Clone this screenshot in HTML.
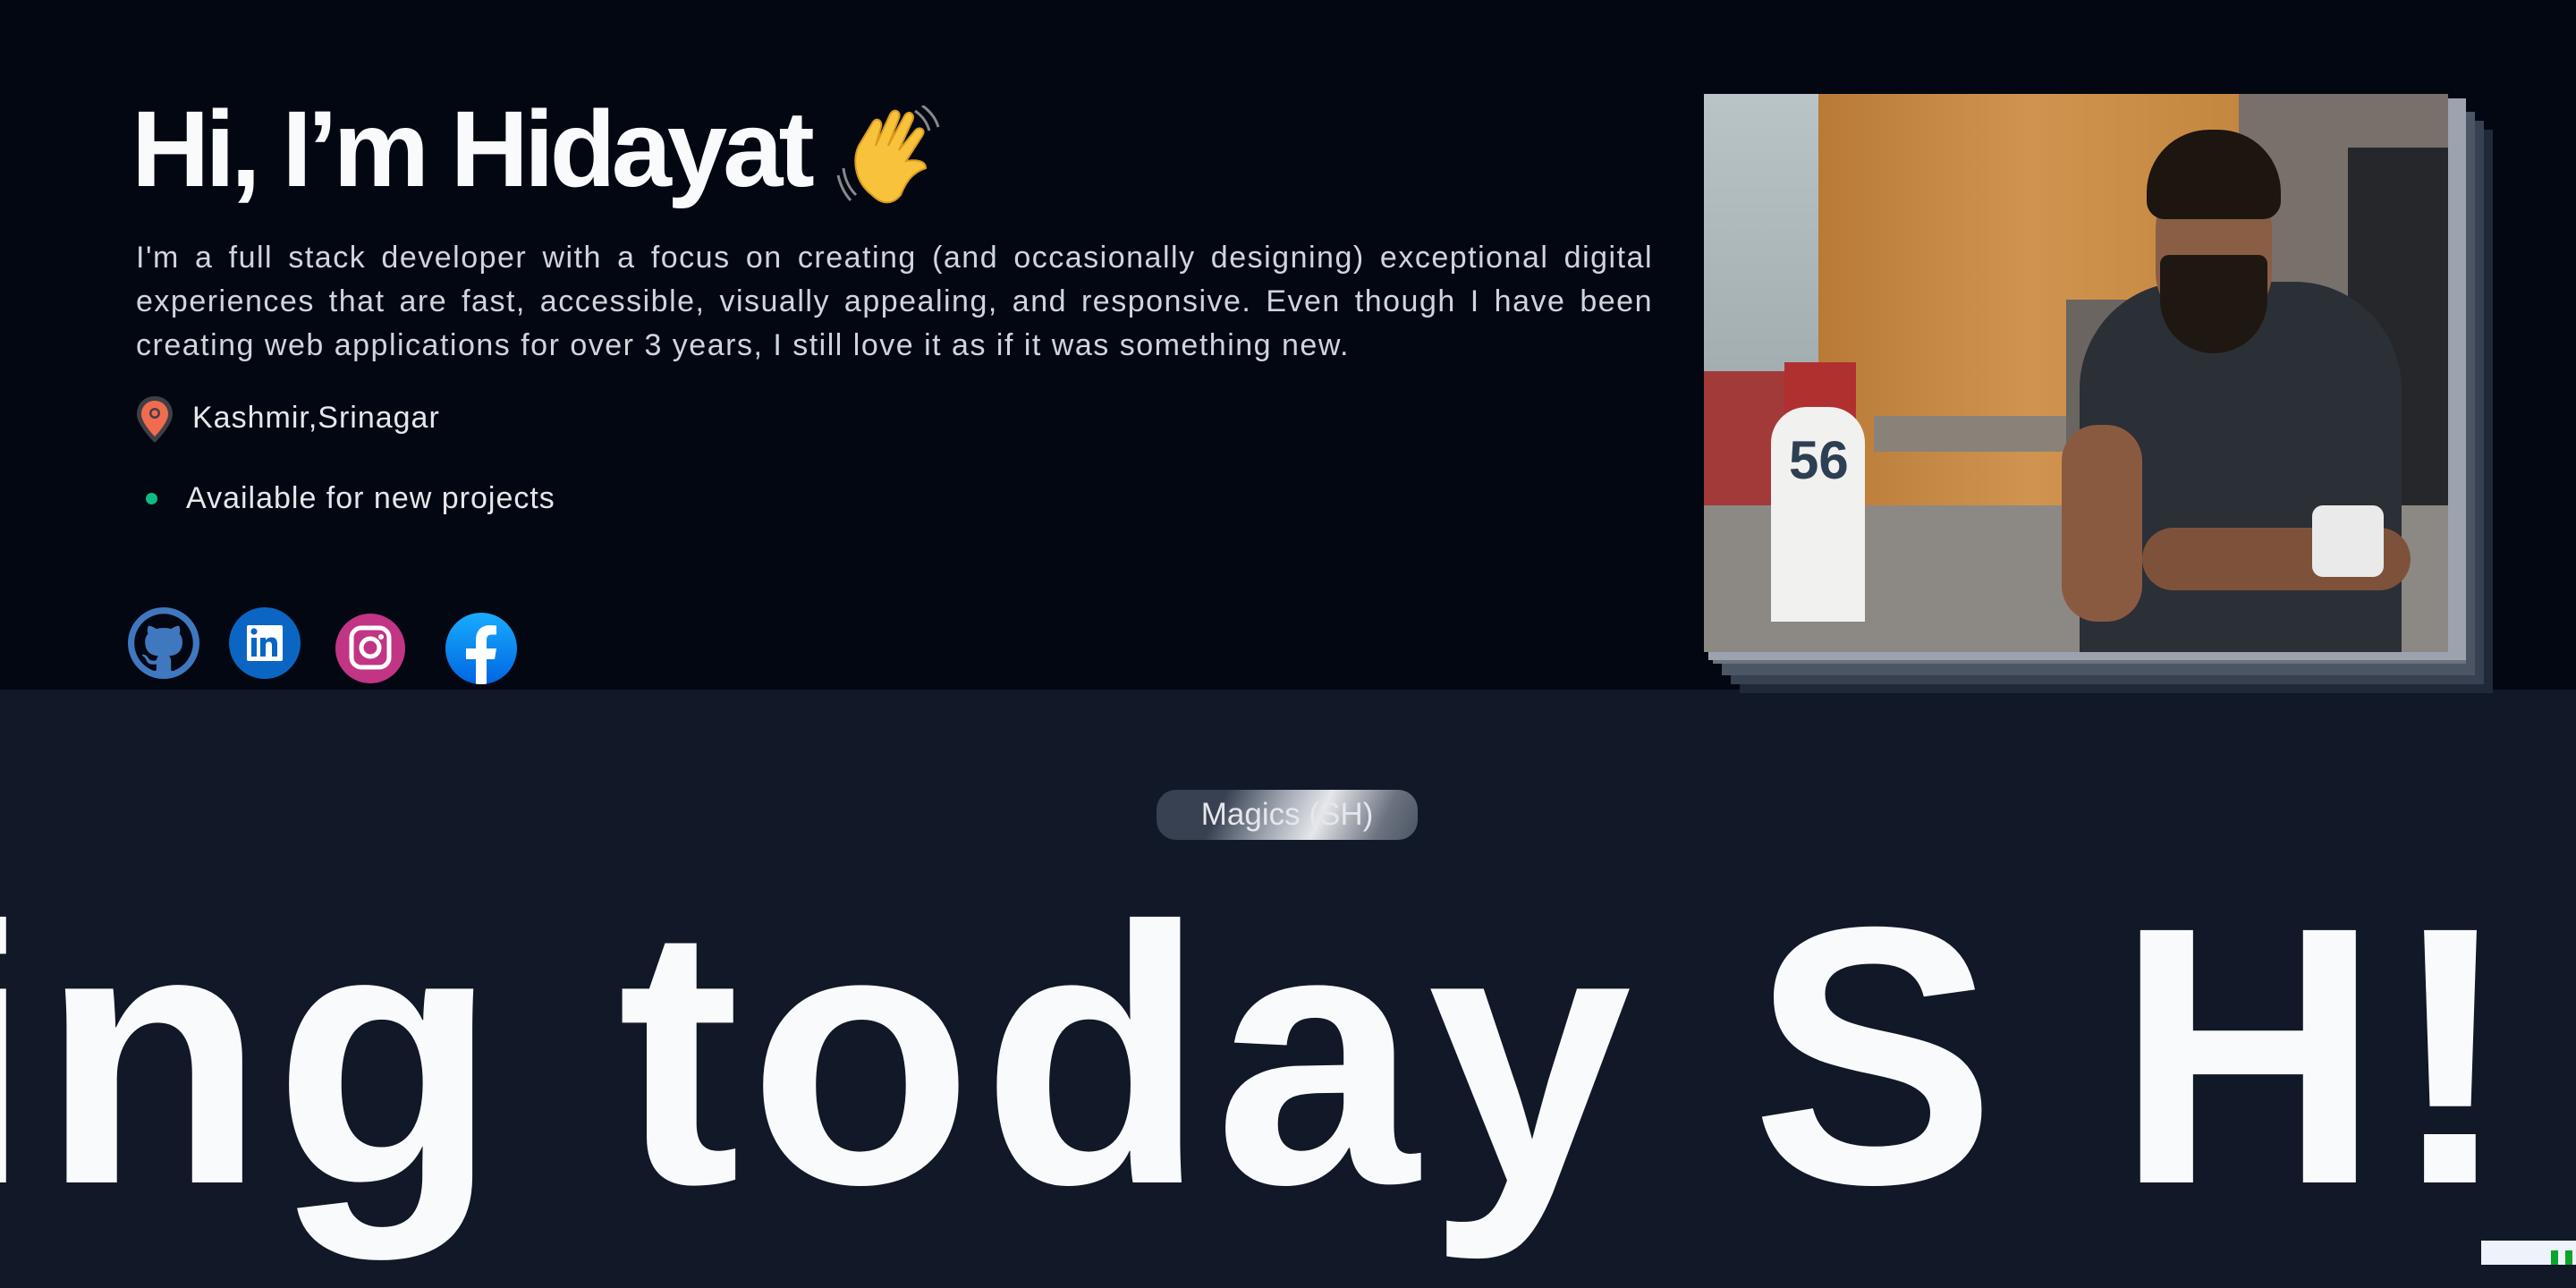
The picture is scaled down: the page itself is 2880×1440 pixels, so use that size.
<!DOCTYPE html>
<html><head><meta charset="utf-8"><style>
*{margin:0;padding:0;box-sizing:border-box}
html,body{width:2880px;height:1414px;overflow:hidden;background:#111827;font-family:"Liberation Sans",sans-serif}
.top{position:absolute;left:0;top:0;width:2880px;height:771px;background:#030712}
h1{position:absolute;left:147px;top:96px;font-size:121px;line-height:140px;font-weight:700;color:#f9fafb;letter-spacing:-5px;white-space:nowrap}
.p{position:absolute;left:152px;top:264px;width:1696px;font-size:34px;line-height:49px;color:#d1d5db;letter-spacing:1.5px}
.p span{display:block;text-align:justify;text-align-last:justify;white-space:nowrap}
.p span.l{text-align-last:left}
.loc{position:absolute;left:215px;top:448px;font-size:34px;color:#e5e7eb;letter-spacing:1px}
.av{position:absolute;left:208px;top:538px;font-size:34px;color:#e5e7eb;letter-spacing:1px}
.dot{position:absolute;left:163px;top:551px;width:13px;height:13px;border-radius:50%;background:#10b981}
.ic{position:absolute}
.layer{position:absolute}
.photo{position:absolute;left:1905px;top:105px;width:832px;height:624px;overflow:hidden;background:#c8893f}
.photo div{position:absolute}
.pill{position:absolute;left:1293px;top:883px;width:292px;height:56px;border-radius:22px;background:linear-gradient(115deg,#374151 0%,#374151 25%,#9ca3af 45%,#e5e7eb 62%,#6b7280 85%,#4b5563 100%);color:#e5e7eb;font-size:35px;line-height:56px;text-align:center}
.big{position:absolute;right:62px;top:920px;font-size:410px;line-height:520px;font-weight:900;color:#f9fafb;white-space:nowrap;letter-spacing:10px}
</style></head><body>
<div class="top"></div>
<h1>Hi, I’m Hidayat</h1>
<svg class="ic" style="left:935px;top:118px" width="120" height="115" viewBox="0 0 120 115">
<g fill="#f8c33a" stroke="#d99a1c" stroke-width="2">
<path d="M40 100 C20 85 18 60 25 45 L40 20 C44 12 52 16 50 24 L44 45 L60 10 C64 2 73 6 70 14 L58 45 L76 12 C80 4 89 9 85 17 L70 50 L88 28 C93 22 101 27 96 34 L78 62 C90 60 100 62 100 70 C85 75 78 85 72 100 C62 112 50 110 40 100Z"/>
</g>
<path d="M8 70 Q10 88 22 100 M2 78 Q6 95 16 106" stroke="#888" stroke-width="3" fill="none"/>
<path d="M88 6 Q100 14 104 28 M96 0 Q110 10 114 24" stroke="#888" stroke-width="3" fill="none"/>
</svg>
<div class="p"><span>I'm a full stack developer with a focus on creating (and occasionally designing) exceptional digital</span><span>experiences that are fast, accessible, visually appealing, and responsive. Even though I have been</span><span class="l">creating web applications for over 3 years, I still love it as if it was something new.</span></div>
<svg class="ic" style="left:150px;top:441px" width="46" height="56" viewBox="0 0 46 56"><path d="M23 2C11 2 3 11 3 22c0 13 20 32 20 32s20-19 20-32C43 11 35 2 23 2z" fill="#3f3f46"/><path d="M23 7C14 7 8 14 8 22c0 10 15 25 15 25s15-15 15-25C38 14 32 7 23 7z" fill="#f26b4f"/><circle cx="23" cy="21" r="6" fill="#3f3f46"/><circle cx="23" cy="21" r="3.5" fill="#f26b4f"/></svg>
<div class="loc">Kashmir,Srinagar</div>
<div class="dot"></div>
<div class="av">Available for new projects</div>
<svg class="ic" style="left:143px;top:679px" width="80" height="80" viewBox="0 0 16 16"><circle cx="8" cy="8" r="8" fill="#4078c0"/><path fill="#030712" d="M8 0C3.580 0 0 3.58 0 8c0 3.54 2.29 6.530 5.47 7.59.4.07.55-.17.55-.38 0-.19-.01-.82-.01-1.49-2.01.37-2.53-.49-2.69-.94-.09-.23-.48-.94-.82-1.130-.28-.15-.68-.52-.01-.53.63-.01 1.080.58 1.23.82.72 1.21 1.87.87 2.33.66.07-.52.28-.87.51-1.07-1.780-.2-3.64-.89-3.64-3.95 0-.87.31-1.59.82-2.15-.08-.2-.36-1.02.08-2.12 0 0 .67-.21 2.2.82.64-.18 1.32-.27 2-.27.68 0 1.36.09 2 .27 1.53-1.04 2.2-.82 2.2-.82.44 1.1.16 1.92.08 2.12.51.56.82 1.27.82 2.15 0 3.07-1.87 3.75-3.65 3.95.29.25.54.73.54 1.48 0 1.07-.01 1.93-.01 2.2 0 .21.15.46.55.38A8.013 8.013 0 0016 8c0-4.42-3.58-8-8-8z" transform="translate(8 8) scale(0.82) translate(-8 -8)"/></svg>
<svg class="ic" style="left:256px;top:679px" width="80" height="80" viewBox="0 0 80 80"><circle cx="40" cy="40" r="40" fill="#0a66c2"/><rect x="20" y="20" width="40" height="40" rx="2" fill="#fff"/><rect x="25" y="34" width="6" height="21" fill="#0a66c2"/><circle cx="28" cy="27" r="3.6" fill="#0a66c2"/><path d="M35 34h6v3c1.5-2.5 4-3.5 6.5-3.5 5 0 6.5 3 6.5 8V55h-6V43c0-3-1-4.5-3.3-4.5S41 40 41 43v12h-6z" fill="#0a66c2"/></svg>
<svg class="ic" style="left:375px;top:686px" width="78" height="78" viewBox="0 0 78 78"><circle cx="39" cy="39" r="39" fill="#c13584"/><rect x="18" y="16" width="42" height="44" rx="11" fill="none" stroke="#fff" stroke-width="5"/><circle cx="39" cy="38" r="10" fill="none" stroke="#fff" stroke-width="5"/><circle cx="51" cy="26" r="3" fill="#fff"/></svg>
<svg class="ic" style="left:498px;top:685px" width="80" height="80" viewBox="0 0 80 80"><defs><linearGradient id="fb" x1="0" y1="0" x2="0" y2="1"><stop offset="0" stop-color="#18acfe"/><stop offset="1" stop-color="#0165e1"/></linearGradient><clipPath id="c"><circle cx="40" cy="40" r="40"/></clipPath></defs><circle cx="40" cy="40" r="40" fill="url(#fb)"/><path clip-path="url(#c)" d="M34 80V52H23V40h11v-9c0-11 6-17 16-17 4 0 7 .5 7 .5v10h-5c-5 0-6 3-6 6V40h11l-2 12h-9v28z" fill="#fff"/></svg>
<div class="layer" style="left:1945px;top:145px;width:842px;height:630px;background:#1f2937"></div>
<div class="layer" style="left:1935px;top:135px;width:842px;height:630px;background:#374151"></div>
<div class="layer" style="left:1925px;top:125px;width:842px;height:630px;background:#4b5563"></div>
<div class="layer" style="left:1915px;top:115px;width:842px;height:627px;background:#6b7280"></div>
<div class="layer" style="left:1910px;top:110px;width:847px;height:628px;background:#9ca3af"></div>
<div class="photo">
<div style="left:0;top:0;width:128px;height:624px;background:linear-gradient(#b8c4c6,#8d989a)"></div>
<div style="left:128px;top:0;width:470px;height:624px;background:linear-gradient(90deg,#b97a38,#d09450 50%,#c4873f)"></div>
<div style="left:598px;top:0;width:234px;height:624px;background:#77706b"></div>
<div style="left:720px;top:60px;width:112px;height:500px;background:#25272b"></div>
<div style="left:0;top:310px;width:90px;height:260px;background:#a23a3a"></div>
<div style="left:90px;top:300px;width:80px;height:120px;background:#b03030"></div>
<div style="left:190px;top:360px;width:260px;height:40px;background:#888279"></div>
<div style="left:405px;top:230px;width:90px;height:200px;background:#6a6560"></div>
<div style="left:0;top:460px;width:832px;height:164px;background:#8c8985"></div>
<div style="left:420px;top:210px;width:360px;height:420px;border-radius:120px 120px 0 0;background:#2b2f36"></div>
<div style="left:400px;top:370px;width:90px;height:220px;border-radius:40px;background:#8a5a40"></div>
<div style="left:490px;top:485px;width:300px;height:70px;border-radius:35px;background:#7e523a"></div>
<div style="left:680px;top:460px;width:80px;height:80px;border-radius:12px;background:#eaeaea"></div>
<div style="left:505px;top:90px;width:130px;height:170px;border-radius:60px;background:#8a5e45"></div>
<div style="left:510px;top:180px;width:120px;height:110px;border-radius:10px 10px 60px 60px;background:#1f1712"></div>
<div style="left:495px;top:40px;width:150px;height:100px;border-radius:70px 70px 20px 20px;background:#1c1510"></div>
<div style="left:75px;top:350px;width:105px;height:240px;background:#f1f1ef;border-radius:40px 40px 0 0"></div>
<div style="left:95px;top:375px;font-size:60px;font-weight:700;color:#2d3f52">56</div>
</div>
<div class="pill">Magics (SH)</div>
<div class="big">ing today S H!</div>
<div style="position:absolute;left:2774px;top:1387px;width:106px;height:27px;background:#eef2fb"></div>
<div style="position:absolute;left:2852px;top:1398px;width:8px;height:16px;background:#0aa52a"></div>
<div style="position:absolute;left:2868px;top:1398px;width:8px;height:16px;background:#0aa52a"></div>
</body></html>
